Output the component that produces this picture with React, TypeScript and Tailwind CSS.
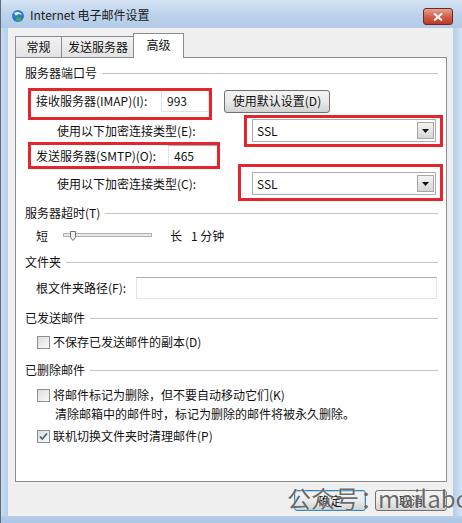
import React from "react";

const font = { fontFamily: '"Noto Sans CJK SC", "Noto Sans", sans-serif' };

function Heading({ text }: { text: string }) {
  return (
    <div className="flex h-[16px] items-center">
      <span>{text}</span>
      <div className="ml-[5px] h-px flex-1 bg-[#c4c4c4]" />
    </div>
  );
}

function SelectBox({ value }: { value: string }) {
  return (
    <div className="flex h-[23px] w-[184px] items-center border border-[#abadb3] bg-white">
      <span className="pl-[4px] text-[12px]">{value}</span>
      <div className="ml-auto mr-[1px] flex h-[17px] w-[17px] items-center justify-center border border-[#a7a7a7] bg-gradient-to-b from-[#f4f4f4] to-[#d6d6d6]">
        <svg width="7" height="4" viewBox="0 0 7 4">
          <path d="M0 0h7L3.5 4z" fill="#111" />
        </svg>
      </div>
    </div>
  );
}

function Checkbox({ checked }: { checked?: boolean }) {
  return (
    <span className="flex h-[13px] w-[13px] shrink-0 items-center justify-center border border-[#8e8f8f] bg-gradient-to-br from-[#dcdcdc] to-[#fbfbfb]">
      {checked && (
        <svg width="9" height="9" viewBox="0 0 9 9">
          <path d="M1 4.5l2.3 2.5L8 1.5" fill="none" stroke="#4c5f8a" strokeWidth="1.8" />
        </svg>
      )}
    </span>
  );
}

function WinButton({ label, primary }: { label: string; primary?: boolean }) {
  return (
    <button
      className={`flex h-[21px] w-[72px] items-center justify-center rounded-[3px] border bg-gradient-to-b from-[#f2f2f2] via-[#ebebeb] to-[#d2d2d2] text-[12px] ${
        primary ? "border-[#3c7fb1] shadow-[inset_0_0_0_1px_#a8d8f2]" : "border-[#707070]"
      }`}
    >
      {label}
    </button>
  );
}

export default function App() {
  return (
    <div className="relative flex h-[523px] w-[462px] flex-col overflow-hidden border-l border-[#5f6b78] bg-[#b9d1ec] text-[12px] text-[#111]" style={font}>
      {/* Title bar */}
      <div className="flex h-[28px] items-start bg-gradient-to-b from-[#d6e4f4] via-[#bdd3ec] to-[#b3cbe7]">
        <div className="ml-[10px] mt-[9px] h-[14px] w-[14px]">
          <svg width="14" height="14" viewBox="0 0 14 14">
            <circle cx="7" cy="7" r="6" fill="#2f7cc4" />
            <path d="M3 4c3-2 7-1 8 2-2-1-5-1-6 1z" fill="#fff" opacity="0.85" />
            <path d="M6 8c2 0 4 1 5 3-2 1-4 1-6 0z" fill="#48b04a" />
          </svg>
        </div>
        <span className="ml-[5px] mt-[6px] text-[12px] text-[#1a1a1a]">Internet 电子邮件设置</span>
        <div className="ml-auto mr-[9px] mt-[8px] flex h-[17px] w-[30px] items-center justify-center rounded-[3px] border border-[#6b2a20] bg-gradient-to-b from-[#e4a293] via-[#d0604c] to-[#c0382a]">
          <svg width="10" height="8" viewBox="0 0 10 8">
            <path d="M1 0.5l8 7M9 0.5l-8 7" stroke="#fff" strokeWidth="2" />
          </svg>
        </div>
      </div>

      <div className="flex flex-1">
        <div className="w-[7px] bg-gradient-to-r from-[#c9dcf1] to-[#b6cee9]" />
        {/* Client area */}
        <div className="relative flex w-[445px] flex-col bg-[#f0f0f0] pl-[7px] pr-[6px] pt-[5px]">
          {/* Tabs */}
          <div className="flex h-[24px] items-end">
            <div className="flex h-[21px] w-[47px] items-center justify-center border border-b-0 border-[#898c95] bg-gradient-to-b from-[#f2f2f2] to-[#e3e3e3]">常规</div>
            <div className="flex h-[21px] w-[73px] items-center justify-center border border-b-0 border-l-0 border-[#898c95] bg-gradient-to-b from-[#f2f2f2] to-[#e3e3e3]">发送服务器</div>
            <div className="relative z-10 -mb-px -ml-[2px] flex h-[25px] w-[51px] items-start justify-center border border-b-0 border-[#898c95] bg-white pt-[2px]">高级</div>
          </div>

          {/* Panel */}
          <div className="relative flex h-[425px] flex-col border border-[#898c95] bg-white pl-[9px] pr-[8px] pt-[7px]">
            <Heading text="服务器端口号" />

            <div className="mt-[9px] flex h-[22px] items-center pl-[11px]">
              <span className="w-[125px]">接收服务器(IMAP)(I):</span>
              <div className="flex h-[22px] w-[48px] items-center border border-[#e2e3ea] border-t-[#abadb3] bg-white pl-[5px]">993</div>
              <button className="ml-[15px] flex h-[23px] w-[106px] items-center justify-center rounded-[3px] border border-[#707070] bg-gradient-to-b from-[#f2f2f2] via-[#ebebeb] to-[#d2d2d2]">使用默认设置(D)</button>
            </div>

            <div className="mt-[7px] flex h-[23px] items-center pl-[32px]">
              <span className="w-[195px]">使用以下加密连接类型(E):</span>
              <SelectBox value="SSL" />
            </div>

            <div className="mt-[3px] flex h-[22px] items-center pl-[11px]">
              <span className="w-[132px]">发送服务器(SMTP)(O):</span>
              <div className="flex h-[22px] w-[50px] items-center border border-[#e2e3ea] border-t-[#abadb3] bg-white pl-[5px]">465</div>
            </div>

            <div className="mt-[5px] flex h-[23px] items-center pl-[32px]">
              <span className="w-[195px]">使用以下加密连接类型(C):</span>
              <SelectBox value="SSL" />
            </div>

            <div className="mt-[10px]">
              <Heading text="服务器超时(T)" />
            </div>

            <div className="mt-[7px] flex h-[16px] items-center pl-[11px]">
              <span className="w-[27px]">短</span>
              <svg width="89" height="12" viewBox="0 0 89 12">
                <rect x="0.5" y="3.5" width="88" height="3" fill="#e7eaea" stroke="#b0b0b0" />
                <path d="M7.5 1.5h5v6l-2.5 3-2.5-3z" fill="#f4f4f4" stroke="#707070" />
              </svg>
              <span className="ml-[18px]">长</span>
              <span className="ml-[9px]">1 分钟</span>
            </div>

            <div className="mt-[10px]">
              <Heading text="文件夹" />
            </div>

            <div className="mt-[7px] flex h-[22px] items-center pl-[11px]">
              <span className="w-[100px]">根文件夹路径(F):</span>
              <div className="h-[22px] w-[301px] border border-[#e2e3ea] border-t-[#abadb3] bg-white" />
            </div>

            <div className="mt-[11px]">
              <Heading text="已发送邮件" />
            </div>

            <div className="mt-[8px] flex h-[16px] items-center gap-[3px] pl-[12px]">
              <Checkbox />
              <span>不保存已发送邮件的副本(D)</span>
            </div>

            <div className="mt-[12px]">
              <Heading text="已删除邮件" />
            </div>

            <div className="mt-[9px] flex h-[16px] items-center gap-[3px] pl-[12px]">
              <Checkbox />
              <span>将邮件标记为删除，但不要自动移动它们(K)</span>
            </div>
            <div className="mt-[3px] flex h-[16px] items-center pl-[30px]">清除邮箱中的邮件时，标记为删除的邮件将被永久删除。</div>
            <div className="mt-[6px] flex h-[16px] items-center gap-[3px] pl-[12px]">
              <Checkbox checked />
              <span>联机切换文件夹时清理邮件(P)</span>
            </div>

            {/* annotation boxes */}
            <div className="absolute left-[12px] top-[30px] h-[32px] w-[184px] border-[3px] border-[#e3262e]" />
            <div className="absolute left-[228px] top-[57px] h-[32px] w-[199px] border-[3px] border-[#e3262e]" />
            <div className="absolute left-[12px] top-[84px] h-[27px] w-[192px] border-[3px] border-[#e3262e]" />
            <div className="absolute left-[222px] top-[106px] h-[37px] w-[205px] border-[3px] border-[#e3262e]" />
          </div>

          {/* Buttons */}
          <div className="mt-[8px] flex justify-end gap-[9px]">
            <WinButton label="确定" primary />
            <WinButton label="取消" />
          </div>

          {/* watermark */}
          <div className="pointer-events-none absolute left-[279px] top-[458px] flex whitespace-nowrap text-[24px] leading-none text-[#5e5e5e] opacity-90 [text-shadow:0_0_2px_#ffffff]">
            <span>公众号</span>
            <span className="-mr-[6px] ml-[1px]">：</span>
            <span>mailabc</span>
          </div>
        </div>
        <div className="w-[9px] bg-gradient-to-r from-[#b6cee9] to-[#d3e3f4]" />
      </div>
      <div className="h-[7px] bg-gradient-to-b from-[#b6cee9] to-[#a9c4e4]" />
    </div>
  );
}
